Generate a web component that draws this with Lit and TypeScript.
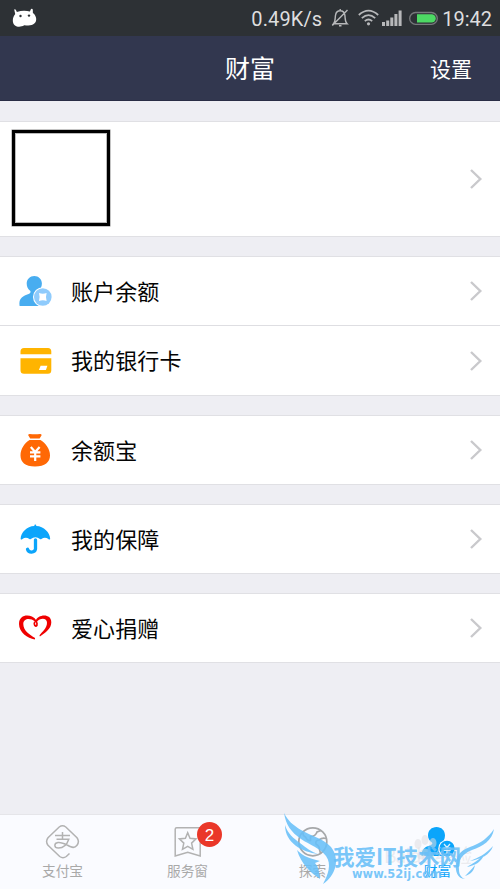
import { LitElement, html, css, svg } from "lit";
import { customElement } from "lit/decorators.js";

const chevron = html`<svg class="chev" width="14" height="22" viewBox="0 0 14 22"><path d="M2 2l9.300 9L2 20" fill="none" stroke="#c9c9cc" stroke-width="2.400"/></svg>`;

const icons = {
  balance: svg`<svg width="36" height="36" viewBox="0 0 36 36">
    <path d="M17.300 3c4.300 0 7.600 3.200 7.600 7.500 0 3.200-1.400 5.800-3.500 7.100-.6.800-.4 1.900.6 2.500l6 3.200V33H2.600c-1-6.500 1.800-9.300 7-11.200 3.200-1.100 4.400-2.200 3.800-3.900C10.900 16.300 9.700 13.800 9.700 10.500 9.700 6.200 13 3 17.300 3z" fill="#48adf0"/>
    <circle cx="25.800" cy="24" r="9.800" fill="#fff"/><circle cx="25.800" cy="24" r="8.800" fill="#8fcbfc"/>
    <path d="M22 20.100q3.800 1.300 7.600 0-1.200 3.900 0 7.800-3.800-1.300-7.600 0 1.200-3.900 0-7.800z" fill="#fff"/></svg>`,
  card: svg`<svg width="36" height="36" viewBox="0 0 36 36">
    <path d="M3.500 11.200V8.500Q3.500 5 7 5h24Q34.300 5 34.300 8.500v2.700z M3.500 15.300h30.800v12q0 3.500-3.300 3.500H7Q3.500 30.800 3.500 27.300z" fill="#ffb400"/>
    <path d="M23.600 22.800h6.800l-1.500 4.200h-7z" fill="#fff"/></svg>`,
  bag: svg`<svg width="36" height="36" viewBox="0 0 36 36">
    <path d="M11.200 3.200q0-1.200 1.500-1.200 5.200.7 10.400 0 1.500 0 1.500 1.200l-2 3.300H13.200z M12.500 8h11C28.500 11 33 17 33 23.500c0 6.500-5 11-15 11S3.500 30 3.500 23.500C3.500 17 7.500 11 12.500 8z" fill="#ff6805"/>
    <path d="M13.800 15l4.400 5 4.400-5M13 20.300h10.400M13 24.300h10.400M18.200 20v9" fill="none" stroke="#fff" stroke-width="2.200"/></svg>`,
  umbrella: svg`<svg width="36" height="36" viewBox="0 0 36 36">
    <path d="M18.300 3.500q1 0 1 1.400C26.800 5.200 33 11.300 33.200 17.900q-1 1-1.800 0-3.500-2.200-7 0-.7.600-1.400 0-4.600-3.400-9.200 0-.7.600-1.400 0-3.500-2.200-7 0-1 1-1.800 0C3.800 11.300 9.800 5.200 17.300 4.900q0-1.400 1-1.400z" fill="#0ba5fb"/>
    <path d="M18.500 18.800v9.200a4.100 3.800 0 0 1-8 .3" fill="none" stroke="#0ba5fb" stroke-width="3.300" stroke-linecap="round"/></svg>`,
  heart: svg`<svg width="36" height="36" viewBox="0 0 36 36">
    <path d="M19.300 10.800c-3 1.200-2.300 4.700-.4 5.300 1.700-.6 2-4-2.300-7.300" fill="none" stroke="#ef0000" stroke-width="1.700"/>
    <path d="M18.600 9.600C14.500 3.800 2 3.500 2 14c0 8.500 8.500 14.200 15.800 15.600l.3-1.600C12.500 24.500 6.300 20.600 6.300 14c0-6.200 7.300-6.200 11.300-2.800z" fill="#ef0000"/>
    <path d="M18.400 11.400C20.500 4 34.300 3 34.300 12.200c0 6.500-5.700 10.300-11.400 14.300l-.4-1.300c2.700-3.500 7.500-7 7.500-12.500 0-5.300-7.200-5-10.200-.8z" fill="#ef0000"/></svg>`,
};

const rows: { icon: keyof typeof icons; text: string }[][] = [
  [{ icon: "balance", text: "账户余额" }, { icon: "card", text: "我的银行卡" }],
  [{ icon: "bag", text: "余额宝" }],
  [{ icon: "umbrella", text: "我的保障" }],
  [{ icon: "heart", text: "爱心捐赠" }],
];

@customElement("app-root")
export class AppRoot extends LitElement {
  static styles = css`
    :host { display: flex; flex-direction: column; position: relative; height: 889px; overflow: hidden; background: #eeeef3; color: #050505; font-family: "Noto Sans CJK SC", sans-serif; }
    * { box-sizing: border-box; }
    svg { display: block; flex: none; }
    .status { height: 36px; flex: none; background: #2d3135; display: flex; align-items: center; padding: 0 8px 0 12px; color: #dededf; font: 20px/36px Roboto, sans-serif; }
    .status > span { padding-top: 1px; }
    .speed { margin-left: auto; letter-spacing: .1px; }
    .bell { margin-left: 9px; }
    .wifi { margin-left: 9px; }
    .signal { margin-left: 3px; }
    .battery { margin-left: 7px; margin-right: 4px; }
    .nav { height: 65px; flex: none; background: #32374f; color: #fff; display: grid; grid-template-columns: 1fr auto 1fr; align-items: center; padding: 0 28px 2px; border-bottom: 1px solid #292d45; }
    .title { grid-column: 2; font-size: 25px; line-height: 60px; }
    .settings { justify-self: end; font-size: 21px; line-height: 60px; padding-top: 1px; }
    .list { flex: 1; display: flex; flex-direction: column; gap: 19px; padding-top: 20px; }
    .group { background: #fff; border-top: 1px solid #e0e0e4; border-bottom: 1px solid #e0e0e4; flex: none; height: 70px; }
    .profile { height: 116px; display: flex; align-items: center; justify-content: space-between; padding: 0 17px 0 12px; }
    .avatar { width: 98px; height: 96px; border: 3px solid #000; box-shadow: 0 0 0 .5px #888, inset 0 0 0 1px #bbb; margin-top: -2px; }
    .pair { height: 140px; }
    .row { height: 68px; display: flex; align-items: center; padding: 0 17px; font-size: 22px; }
    .row + .row { border-top: 1px solid #dedee2; height: 70px; }
    .label { flex: 1; margin-left: 18px; line-height: 32px; padding-bottom: 3px; letter-spacing: .1px; }
    .tabs { height: 75px; flex: none; border-top: 1px solid #e5e5e9; background: #fafbff; display: grid; grid-template-columns: repeat(4, 1fr); }
    .tab { display: flex; flex-direction: column; align-items: center; color: #a9a9a9; font-size: 13.700px; line-height: 20px; padding-top: 8px; position: relative; }
    .tab svg { margin-bottom: 1px; }
    .active { color: #0ba5fb; }
    .badge { position: absolute; left: 72px; top: 7px; width: 25px; height: 25px; border-radius: 50%; background: #ea3729; color: #fff; font: 17px/27px "Liberation Sans", sans-serif; text-align: center; }
    .mark { position: absolute; left: 280px; top: 808px; width: 220px; height: 81px; pointer-events: none; }
    .mark text { font-family: "Noto Sans CJK SC", sans-serif; }
    .mark .big { font-weight: 700; }
    .mark .url { font-family: "DejaVu Sans", sans-serif; font-weight: 700; }
  `;

  render() {
    return html`
      <div class="status">
        <svg width="26" height="20" viewBox="0 0 26 20"><path d="M2.200 1.500q1-.8 1.700.4l1 2q7-2.200 13-.3l1.100-2.500q1.400-.9 1.800.6l.1 3.300C24.600 7.500 25.600 13.500 22 15.800c-2 1.800-5 2-9.800 1.400C9 19.200 5 19 3 17.400c-3-2.500-2.800-8 .2-11.500z" fill="#fff"/><circle cx="8.500" cy="8" r="1.200" fill="#2d3135"/><circle cx="17" cy="7.600" r="1.200" fill="#2d3135"/></svg>
        <span class="speed">0.49K/s</span>
        <svg class="bell" width="18" height="20" viewBox="0 0 18 20" fill="none" stroke="#b7b8ba" stroke-width="1.400"><path d="M2.500 15.800c2.100-2 1.500-6 2-8.500C5 4 7 2.800 9.200 2.800S13.400 4 13.900 7.300c.4 3-.1 6.500 2.200 8.500zM9.200 1v2M8 17.800h2.500M1.300 17.500L16.500 2"/></svg>
        <svg class="wifi" width="21" height="18" viewBox="0 0 21 18" fill="none" stroke="#b7b8ba" stroke-width="1.700"><path d="M.8 6Q10.500-2.800 20.200 6M3.800 9.200q6.700-6.200 13.400 0M6.800 12.200q3.700-3.400 7.400 0"/><circle cx="10.500" cy="14.800" r="1.600" fill="#b7b8ba" stroke="none"/></svg>
        <svg class="signal" width="20" height="18" viewBox="0 0 20 18"><path d="M0 13h3v4H0zM4.200 11.500h3V17h-3zM8.300 8.500h3V17h-3zM12.400 5h3v12h-3zM16.600 1.500h3V17h-3z" fill="#b7b8ba"/></svg>
        <svg class="battery" width="29" height="14" viewBox="0 0 29 14"><rect x=".7" y="1.500" width="27.600" height="11.800" rx="5.900" fill="none" stroke="#77797c" stroke-width="1.300"/><path d="M8 3.200h14.600a4.200 4.200 0 0 1 0 8.400H8z" fill="#4dd964"/></svg>
        <span>19:42</span>
      </div>
      <div class="nav"><div class="title">财富</div><div class="settings">设置</div></div>
      <div class="list">
        <div class="group profile"><div class="avatar"></div>${chevron}</div>
        ${rows.map((g) => html`<div class="group ${g.length > 1 ? "pair" : ""}">${g.map((r) => html`<div class="row">${icons[r.icon]}<div class="label">${r.text}</div>${chevron}</div>`)}</div>`)}
      </div>
      <div class="tabs">
        <div class="tab">
          <svg width="36" height="36" viewBox="0 0 36 36" fill="none" stroke="#b2b2b2" stroke-width="1.500"><path d="M24.500 30.500l-3.200 3q-3.300 2.300-6.600 0L3 22.200q-2.800-3.700 0-7.400L14.200 4q3.300-2.600 6.600 0L32 14.800q2.800 3.700 0 7.400-2.500 3.300-6.200 1.600C20.500 21.300 17.500 19 13 19.500c-4.200.5-4.300 5.500.5 5.500 6 0 9-5 10.300-8.800H11.500M10 12.500h15M17.500 9v7"/></svg>
          <span>支付宝</span>
        </div>
        <div class="tab">
          <svg width="36" height="36" viewBox="0 0 36 36" fill="none" stroke="#b2b2b2" stroke-width="1.500"><path d="M5.200 6.200q0-1.500 1.500-1.500h22q1.500 0 1.500 1.500v26.800L17.700 29.200 5.200 33z M17.700 9.700l2.300 5.500 6 .7-4.400 4.200 1.300 6.200-5.200-3-5.200 3 1.300-6.200-4.400-4.200 6-.7z"/></svg>
          <span>服务窗</span><span class="badge">2</span>
        </div>
        <div class="tab">
          <svg width="36" height="36" viewBox="0 0 36 36" fill="none" stroke="#a6a8aa" stroke-width="1.700"><circle cx="17.800" cy="18.800" r="14"/><path d="M8 9.500q-.5 3 2.500 4.500 2 4.500 5 3.500l0-4q5 0 6.500-4.500l4-1.500M31 15.500q-4-1-7 1.500-4 .5-3 4 3.500 2 3.500 5.500l1 4"/></svg>
          <span>探索</span>
        </div>
        <div class="tab active">
          <svg width="36" height="36" viewBox="0 0 36 36"><path d="M16.500 4c5 0 8.500 3.500 8.500 8.500 0 4-2 6.800-4.200 8.300-.8 1.500-.3 2.700.7 3.500l5 2V33H1.500c0-6 2.500-8.500 7-10 3.500-1.200 4.500-2 3.500-3.500-2.500-1.500-4-4-4-7C8 7.500 11.500 4 16.500 4z" fill="#0ba5fb"/><circle cx="27" cy="25.500" r="8.700" fill="#fafbff"/><circle cx="27" cy="25.500" r="7.700" fill="#0ba5fb"/><path d="M24 21l3 3.500 3-3.500M23.500 25h7M23.500 27.500h7M27 24.500v6" fill="none" stroke="#d9f0ff" stroke-width="1.200"/></svg>
          <span>财富</span>
        </div>
      </div>
      <svg class="mark" viewBox="280 808 220 81">
        <g fill="#dedee2" fill-opacity=".55"><ellipse cx="418" cy="844" rx="3.500" ry="5"/><ellipse cx="425" cy="840" rx="3.500" ry="5"/><ellipse cx="433" cy="843" rx="3.500" ry="5"/><path d="M417 855q8-13 17 0 1 6-8 4-9 2-9-4z"/>
        <text x="384" y="863" font-size="19" textLength="88">Baidu 经验</text></g>
        <g fill="#68bff8" fill-opacity=".88">
          <path d="M284 813c4 8 9 12 17 17 10 6 22 8 30 17 10 13 4 29-8 37 5-9 9-20 3-28-6-8-16-11-25-17-10-7-15-14-17-26z"/>
          <path d="M285 825c3 9 8 13 15 18 6 5 12 9 18 11-16-2-33-11-33-29z"/><path d="M297 850c4 4 9 8 23 11l-5 2q4 4 5 16c-9-6-19-15-23-29z"/>
          <path d="M494 829c-2 12-11 17-22 21-10 4-14 10-13 20 0 5 3 8 6 9-8 0-10-9-9-16 1-9 6-13 14-16 11-4 18-9 24-18z"/>
          <path d="M493 846c-3 9-12 13-23 15 8-3 16-7 23-15zM484 855c-3 7-8 10-17 12 5-3 10-6 17-12zM475 865c-1 6-4 9-10 11 3-3 6-6 10-11z"/>
          <text class="big" x="333" y="865" font-size="22" textLength="128" lengthAdjust="spacingAndGlyphs">我爱IT技术网</text>
          <text class="url" x="352" y="878" font-size="11.500" textLength="90" lengthAdjust="spacingAndGlyphs">www.52ij.com</text>
        </g>
      </svg>`;
  }
}
